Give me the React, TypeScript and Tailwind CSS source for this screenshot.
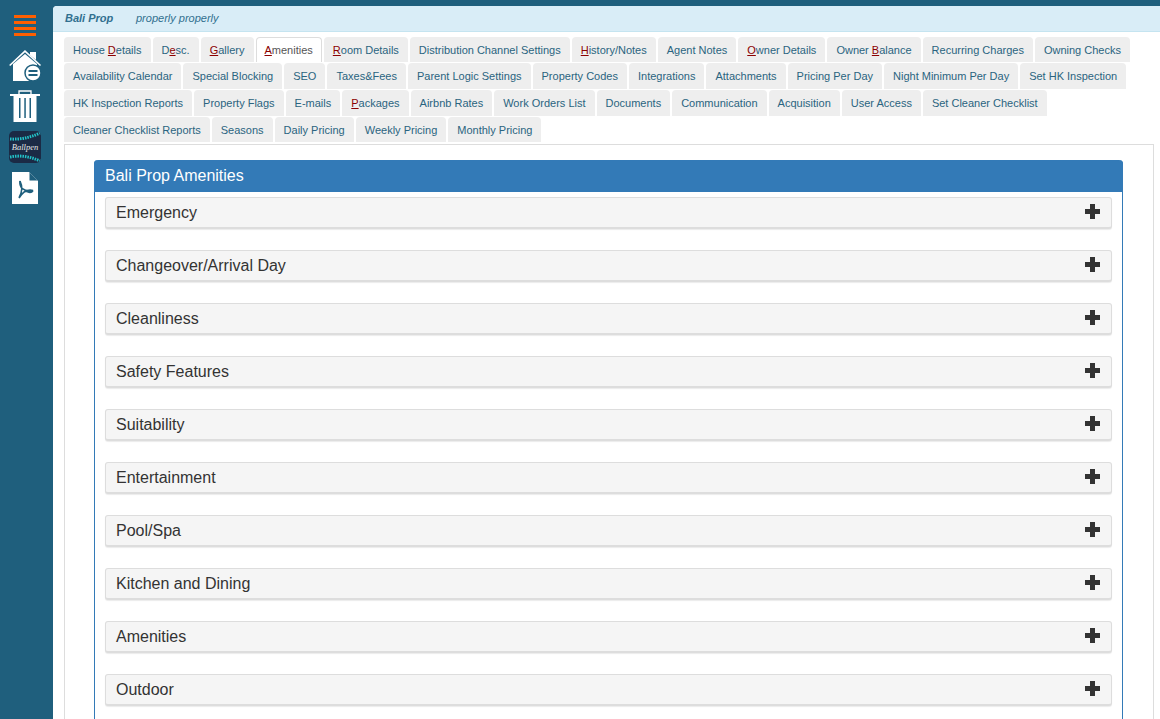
const tabs: { label: string; hot?: number; active?: boolean }[] = [
  { label: "House Details", hot: 6 },
  { label: "Desc.", hot: 1 },
  { label: "Gallery", hot: 0 },
  { label: "Amenities", hot: 0, active: true },
  { label: "Room Details", hot: 0 },
  { label: "Distribution Channel Settings" },
  { label: "History/Notes", hot: 0 },
  { label: "Agent Notes" },
  { label: "Owner Details", hot: 0 },
  { label: "Owner Balance", hot: 6 },
  { label: "Recurring Charges" },
  { label: "Owning Checks" },
  { label: "Availability Calendar" },
  { label: "Special Blocking" },
  { label: "SEO" },
  { label: "Taxes&Fees" },
  { label: "Parent Logic Settings" },
  { label: "Property Codes" },
  { label: "Integrations" },
  { label: "Attachments" },
  { label: "Pricing Per Day" },
  { label: "Night Minimum Per Day" },
  { label: "Set HK Inspection" },
  { label: "HK Inspection Reports" },
  { label: "Property Flags" },
  { label: "E-mails" },
  { label: "Packages", hot: 0 },
  { label: "Airbnb Rates" },
  { label: "Work Orders List" },
  { label: "Documents" },
  { label: "Communication" },
  { label: "Acquisition" },
  { label: "User Access" },
  { label: "Set Cleaner Checklist" },
  { label: "Cleaner Checklist Reports" },
  { label: "Seasons" },
  { label: "Daily Pricing" },
  { label: "Weekly Pricing" },
  { label: "Monthly Pricing" },
];

const sections = [
  "Emergency",
  "Changeover/Arrival Day",
  "Cleanliness",
  "Safety Features",
  "Suitability",
  "Entertainment",
  "Pool/Spa",
  "Kitchen and Dining",
  "Amenities",
  "Outdoor",
];

const Tab = ({ label, hot, active }: { label: string; hot?: number; active?: boolean }) => (
  <div
    className={
      active
        ? "h-[25.6px] px-2 pt-[5px] bg-white border border-b-0 border-[#ddd] rounded-t text-[#555] text-[11px] leading-[15px] whitespace-nowrap"
        : "h-[25.6px] px-[9px] pt-[6px] bg-[#eeeeee] rounded-t text-[#2a6480] text-[11px] leading-[15px] whitespace-nowrap"
    }
  >
    {hot === undefined ? (
      label
    ) : (
      <>
        {label.slice(0, hot)}
        <span className="text-[#8b0000] underline">{label[hot]}</span>
        {label.slice(hot + 1)}
      </>
    )}
  </div>
);

const Sidebar = () => (
  <div className="w-[53px] shrink-0 flex flex-col items-start">
    <div className="mt-[15px] ml-[14px] w-[22px] flex flex-col gap-[3px]">
      <div className="h-[3px] bg-[#ff5f00]" />
      <div className="h-[3px] bg-[#ff5f00]" />
      <div className="h-[3px] bg-[#ff5f00]" />
      <div className="h-[3px] bg-[#ff5f00]" />
    </div>
    <svg className="mt-[14px] ml-[9px]" width="33" height="32" viewBox="0 0 33 32">
      <path d="M0.7 15.5 L16 1.2 L31.5 15.5" fill="none" stroke="#fff" strokeWidth="1.6" />
      <path d="M21 2h6v8l-6-5z" fill="#fff" />
      <path d="M4 14 L16 4 L28 14 V31 H4z" fill="#fff" />
      <circle cx="24" cy="23" r="8" fill="#fff" stroke="#1f5f7d" strokeWidth="1.5" />
      <rect x="19.5" y="20" width="9" height="2" fill="#1f5f7d" />
      <rect x="19.5" y="24" width="9" height="2" fill="#1f5f7d" />
    </svg>
    <svg className="mt-[8px] ml-[10px]" width="30" height="32" viewBox="0 0 30 32">
      <path d="M9 4V1h12v3" fill="none" stroke="#fff" strokeWidth="1.3" />
      <rect x="0" y="4" width="30" height="2" fill="#fff" />
      <path d="M3.5 6h23v26h-23z" fill="#fff" />
      <rect x="9" y="8" width="1.5" height="20" fill="#1f5f7d" />
      <rect x="14.3" y="8" width="1.5" height="20" fill="#1f5f7d" />
      <rect x="19.5" y="8" width="1.5" height="20" fill="#1f5f7d" />
    </svg>
    <div className="mt-[9px] ml-[9px] w-[32px] h-[32px] rounded-[5px] bg-[#1b2a45] relative overflow-hidden flex items-center justify-center">
      <svg className="absolute inset-0" width="32" height="32" viewBox="0 0 32 32">
        <path d="M1 8 Q16 9 31 2" fill="none" stroke="#22c3c9" strokeWidth="3" strokeDasharray="1.5 1" />
        <path d="M1 26 Q16 23 31 30" fill="none" stroke="#22c3c9" strokeWidth="3" strokeDasharray="1.5 1" />
      </svg>
      <span className="relative text-[#e6e6e6] italic text-[8.5px] font-['Liberation_Serif',serif]">Ballpen</span>
    </div>
    <svg className="mt-[9px] ml-[12px]" width="26" height="32" viewBox="0 0 26 32">
      <path d="M0 0H17L26 9V32H0z" fill="#fff" />
      <path d="M17.5 0.5L25.5 8.5H17.5z" fill="#1f5f7d" />
      <path
        d="M8 9 C7 15 11 20 21 18.5 C15 17 10 21 7 26 M8 9 C10 13 11 19 7 26 M21 18.5 C19 22 15 20 12.5 18"
        fill="none"
        stroke="#1f5f7d"
        strokeWidth="1.6"
      />
    </svg>
  </div>
);

const AccordionRow = ({ title }: { title: string }) => (
  <div className="h-[32px] mb-[21px] px-[10px] flex items-center justify-between bg-[#f5f5f5] border border-[#ddd] border-b-2 rounded-[3px] shadow-[0_1px_1px_rgba(0,0,0,0.08)]">
    <span className="mt-[2px] text-[16px] text-[#333] leading-[22px]">{title}</span>
    <svg className="mr-px mb-[2px]" width="15" height="15" viewBox="0 0 15 15">
      <path d="M5 0h5v5h5v5h-5v5H5v-5H0V5h5z" fill="#333" />
    </svg>
  </div>
);

export default function App() {
  return (
    <div className="h-screen overflow-hidden flex bg-[#1f5f7d] font-['Liberation_Sans',Arial,sans-serif]">
      <Sidebar />
      <div className="flex-1 mt-[6px] bg-white rounded-tl-[4px] overflow-hidden">
        <div className="h-[26px] pl-[12px] flex items-center bg-[#d9edf7] border-b border-[#c5e4f0] text-[11px] italic text-[#31708f]">
          <span className="font-bold w-[71px]">Bali Prop</span>
          <span>properly properly</span>
        </div>
        <div className="pl-[11px] pr-[6px] pt-[4.8px]">
          <div className="flex flex-wrap gap-x-[2px] gap-y-px">
            {tabs.map((t) => (
              <Tab key={t.label} label={t.label} hot={t.hot} active={t.active} />
            ))}
          </div>
          <div className="mt-[1.8px] border border-[#ddd] border-b-0 pt-[15px] pl-[29px] pr-[30px]">
            <div className="rounded-t-[4px] border-x border-[#337ab7]">
              <div className="-mx-px h-8 px-[11px] flex items-center bg-[#337ab7] rounded-t-[4px] text-[16px] text-white">
                Bali Prop Amenities
              </div>
              <div className="pt-[5px] px-[10px] pb-10">
                {sections.map((s) => (
                  <AccordionRow key={s} title={s} />
                ))}
              </div>
            </div>
          </div>
        </div>
      </div>
    </div>
  );
}
